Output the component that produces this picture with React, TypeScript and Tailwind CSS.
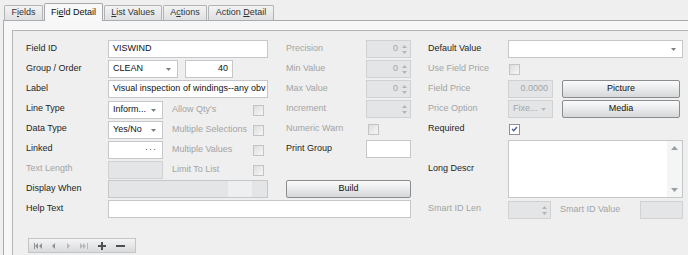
import React from "react"

const font = { fontFamily: '"Liberation Sans", Arial, sans-serif' }

function Label({ children, disabled, className = "" }: { children: React.ReactNode; disabled?: boolean; className?: string }) {
  return (
    <div className={`flex items-center h-[18px] whitespace-nowrap text-[9px] ${disabled ? "text-[#a3a4a6]" : "text-[#1e1e1e]"} ${className}`}>
      {children}
    </div>
  )
}

function TextBox({ value = "", w, disabled, right, className = "" }: { value?: string; w: string; disabled?: boolean; right?: boolean; className?: string }) {
  return (
    <div
      className={`${w} h-[18px] shrink-0 border flex items-center px-[4px] overflow-hidden whitespace-nowrap text-[9px] ${
        disabled ? "bg-[#e4e5e7] border-[#d0d1d3] text-[#a3a4a6]" : "bg-white border-[#c5c7cb] text-[#111]"
      } ${right ? "justify-end" : ""} ${className}`}
    >
      {value}
    </div>
  )
}

function Arrow({ disabled }: { disabled?: boolean }) {
  return (
    <svg width="5" height="3" viewBox="0 0 5 3" className="shrink-0">
      <path d="M0 0h5L2.5 3z" fill={disabled ? "#b8b9bb" : "#7d7f82"} />
    </svg>
  )
}

function Combo({ value = "", w, disabled }: { value?: string; w: string; disabled?: boolean }) {
  return (
    <div
      className={`${w} h-[18px] shrink-0 border flex items-center pl-[4px] pr-[6px] text-[9px] whitespace-nowrap ${
        disabled ? "bg-[#e4e5e7] border-[#d0d1d3] text-[#a3a4a6]" : "bg-white border-[#c5c7cb] text-[#111]"
      }`}
    >
      <span className="flex-1 overflow-hidden">{value}</span>
      <Arrow disabled={disabled} />
    </div>
  )
}

function Spin({ value = "", w }: { value?: string; w: string }) {
  return (
    <div className={`${w} h-[18px] shrink-0 border bg-[#e4e5e7] border-[#d0d1d3] flex items-center justify-end pr-[3px] text-[9px] text-[#a3a4a6]`}>
      <span className="mr-[4px]">{value}</span>
      <div className="flex flex-col gap-[3px]">
        <svg width="5" height="3" viewBox="0 0 5 3"><path d="M0 3h5L2.5 0z" fill="#b3b4b6" /></svg>
        <svg width="5" height="3" viewBox="0 0 5 3"><path d="M0 0h5L2.5 3z" fill="#b3b4b6" /></svg>
      </div>
    </div>
  )
}

function Check({ checked }: { checked?: boolean }) {
  return (
    <div className={`w-[11px] h-[11px] shrink-0 border flex items-center justify-center ${checked ? "border-[#8f9194] bg-white" : "border-[#c3c4c6] bg-gradient-to-br from-[#dcdddf] to-[#f7f7f7]"}`}>
      {checked && (
        <svg width="7" height="6" viewBox="0 0 7 6">
          <path d="M1 3l1.8 1.8L6 1" stroke="#4a5f98" strokeWidth="1.4" fill="none" />
        </svg>
      )}
    </div>
  )
}

function Btn({ children, w }: { children: React.ReactNode; w: string }) {
  return (
    <div className={`${w} h-[18px] shrink-0 border border-[#8a8c8f] rounded-[2px] bg-gradient-to-b from-[#fbfbfb] via-[#e9eaeb] to-[#d6d7d9] flex items-center justify-center text-[9px] text-[#111]`}>
      {children}
    </div>
  )
}

function Tab({ children, active, w }: { children: React.ReactNode; active?: boolean; w: string }) {
  return active ? (
    <div className={`${w} h-[18px] -mb-px mt-[3px] border border-b-0 border-[#a5a7ab] bg-[#f7f8f7] rounded-t-[2px] flex items-center justify-center text-[9px] text-[#111] z-10`}>
      <span>{children}</span>
    </div>
  ) : (
    <div className={`${w} h-[15px] mt-[5px] border border-b-0 border-[#b1b3b7] bg-gradient-to-b from-[#f2f3f3] to-[#dfe0e1] rounded-t-[2px] flex items-center justify-center text-[9px] text-[#333]`}>
      <span>{children}</span>
    </div>
  )
}

function NavBar() {
  const c = "#8f9194"
  return (
    <div className="w-[108px] h-[15px] ml-[2px] border border-[#c3c5c8] bg-gradient-to-b from-[#f4f4f5] to-[#d9dadc] flex items-center px-[5px] gap-[10px]">
      <svg width="8" height="6" viewBox="0 0 8 6"><path d="M0 0h1v6H0zM4 0v6L1 3zM8 0v6L5 3z" fill={c} /></svg>
      <svg width="4" height="6" viewBox="0 0 4 6"><path d="M3 0v6L0 3z" fill={c} /></svg>
      <svg width="4" height="6" viewBox="0 0 4 6"><path d="M1 0v6l3-3z" fill="#b5b7ba" /></svg>
      <svg width="8" height="6" viewBox="0 0 8 6"><path d="M0 0v6l3-3zM3 0v6l3-3zM7 0h1v6H7z" fill="#b5b7ba" /></svg>
      <svg width="8" height="8" viewBox="0 0 8 8"><path d="M3 0h2v3h3v2H5v3H3V5H0V3h3z" fill="#4d4f52" /></svg>
      <svg width="9" height="2" viewBox="0 0 9 2"><path d="M0 0h9v2H0z" fill="#4d4f52" /></svg>
    </div>
  )
}

export default function App() {
  return (
    <div className="w-[688px] h-[255px] bg-[#eeefee] overflow-hidden" style={font}>
      {/* tabs */}
      <div className="flex items-start gap-[1px] pl-[4px] h-[20px]">
        <Tab w="w-[39px]">F<u>i</u>elds</Tab>
        <Tab w="w-[59px]" active>Fi<u>e</u>ld Detail</Tab>
        <Tab w="w-[58px]"><u>L</u>ist Values</Tab>
        <Tab w="w-[44px]">A<u>c</u>tions</Tab>
        <Tab w="w-[66px]">Action <u>D</u>etail</Tab>
      </div>

      {/* tab page */}
      <div className="ml-[3px] h-[235px] border-t border-l border-[#a9abaf] bg-[#f6f7f6] pt-[9px] pl-[8px]">
        <div className="h-full border-t border-l border-[#b3b5b9] bg-[#eeefee] pt-[9px] pl-[13px]">
          <div className="grid grid-cols-[82px_160px_18px_80px_45px_17px_80px_175px] auto-rows-[20px]">
            {/* row 1 */}
            <Label>Field ID</Label>
            <TextBox w="w-[160px]" value="VISWIND" />
            <div />
            <Label disabled>Precision</Label>
            <Spin w="w-[45px]" value="0" />
            <div />
            <Label>Default Value</Label>
            <Combo w="w-[175px]" />

            {/* row 2 */}
            <Label>Group / Order</Label>
            <div className="flex gap-[7px]">
              <Combo w="w-[70px]" value="CLEAN" />
              <TextBox w="w-[48px]" value="40" right />
            </div>
            <div />
            <Label disabled>Min Value</Label>
            <Spin w="w-[45px]" value="0" />
            <div />
            <Label disabled>Use Field Price</Label>
            <div className="flex items-center h-[18px] pl-[1px]"><Check /></div>

            {/* row 3 */}
            <Label>Label</Label>
            <TextBox w="w-[160px]" value="Visual inspection of windings--any obv" />
            <div />
            <Label disabled>Max Value</Label>
            <Spin w="w-[45px]" value="0" />
            <div />
            <Label disabled>Field Price</Label>
            <div className="flex gap-[9px]">
              <TextBox w="w-[45px]" value="0.0000" disabled right />
              <Btn w="w-[118px]">Picture</Btn>
            </div>

            {/* row 4 */}
            <Label>Line Type</Label>
            <div className="flex items-center">
              <Combo w="w-[55px]" value="Inform..." />
              <Label disabled className="ml-[9px] w-[81px]">Allow Qty's</Label>
              <Check />
            </div>
            <div />
            <Label disabled>Increment</Label>
            <Spin w="w-[45px]" />
            <div />
            <Label disabled>Price Option</Label>
            <div className="flex gap-[9px]">
              <Combo w="w-[45px]" value="Fixe..." disabled />
              <Btn w="w-[118px]">Media</Btn>
            </div>

            {/* row 5 */}
            <Label>Data Type</Label>
            <div className="flex items-center">
              <Combo w="w-[55px]" value="Yes/No" />
              <Label disabled className="ml-[9px] w-[81px]">Multiple Selections</Label>
              <Check />
            </div>
            <div />
            <Label disabled>Numeric Warn</Label>
            <div className="flex items-center h-[18px] pl-[2px]"><Check /></div>
            <div />
            <Label>Required</Label>
            <div className="flex items-center h-[18px] pl-[1px]"><Check checked /></div>

            {/* row 6 */}
            <Label>Linked</Label>
            <div className="flex items-center">
              <div className="w-[55px] h-[18px] border border-[#c5c7cb] bg-white flex items-center justify-end pr-[5px] text-[9px] text-[#555] tracking-[1px]">···</div>
              <Label disabled className="ml-[9px] w-[81px]">Multiple Values</Label>
              <Check />
            </div>
            <div />
            <Label>Print Group</Label>
            <TextBox w="w-[45px]" />
            <div />
            <Label className="row-span-3 h-[58px]">Long Descr</Label>
            <div className="row-span-3 w-[175px] h-[58px] border border-[#c5c7cb] bg-white flex justify-end">
              <div className="w-[15px] h-full bg-[#f4f5f5] flex flex-col items-center justify-between py-[5px]">
                <svg width="7" height="4" viewBox="0 0 7 4"><path d="M0 4h7L3.5 0z" fill="#9a9ea6" /></svg>
                <svg width="7" height="4" viewBox="0 0 7 4"><path d="M0 0h7L3.5 4z" fill="#9a9ea6" /></svg>
              </div>
            </div>

            {/* row 7 */}
            <Label disabled>Text Length</Label>
            <div className="flex items-center">
              <TextBox w="w-[55px]" disabled />
              <Label disabled className="ml-[9px] w-[81px]">Limit To List</Label>
              <Check />
            </div>
            <div />
            <div />
            <div />
            <div />

            {/* row 8 */}
            <Label>Display When</Label>
            <div className="w-[160px] h-[18px] border border-[#c5c7cb] bg-[#e4e5e7] flex justify-end pr-[15px]">
              <div className="w-[24px] h-full bg-[#eeeff0]" />
            </div>
            <div />
            <div className="col-span-2"><Btn w="w-[125px]">Build</Btn></div>
            <div />

            {/* row 9 */}
            <Label>Help Text</Label>
            <div className="col-span-4"><TextBox w="w-[303px]" /></div>
            <div />
            <Label disabled>Smart ID Len</Label>
            <div className="flex items-center">
              <Spin w="w-[43px]" />
              <Label disabled className="ml-[9px] w-[80px]">Smart ID Value</Label>
              <TextBox w="w-[43px]" disabled />
            </div>
          </div>

          <div className="mt-[18px]">
            <NavBar />
          </div>
        </div>
      </div>
    </div>
  )
}
